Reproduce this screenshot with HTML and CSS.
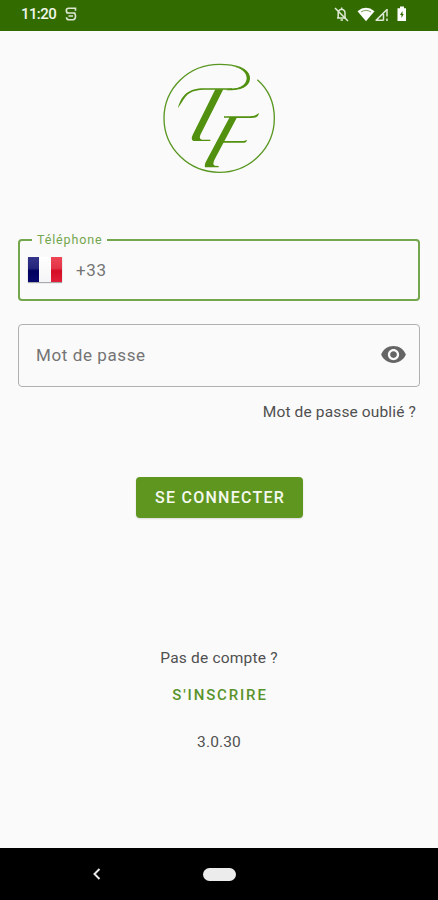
FILE: index.html
```html
<!DOCTYPE html>
<html lang="fr">
<head>
<meta charset="utf-8">
<title>Connexion</title>
<link rel="stylesheet" href="styles.css">
</head>
<body>
<div class="screen">
  <header class="status">
    <span class="clock">11:20</span>
    <svg class="status-s" viewBox="0 0 14 16" width="14" height="16"><path d="M11.500 4.800V2.200H4.600Q2.300 2.200 2.300 4.600T4.600 7H9.200Q11.500 7 11.500 10.200T9 13.800H5Q2.500 13.800 2.500 11.200M2.300 7H11.500M4.500 10H9"/></svg>
    <svg class="status-icons" viewBox="0 0 78 20" width="78" height="20">
      <path class="line" d="M5 14H14M6.200 13.500V9Q6.200 5.600 9.700 5.200Q13 5.600 13 9V13.500M9.700 3.500V5.500"/>
      <path class="line" d="M3 4L16 17M8.500 16H11"/>
      <path class="fill" d="M25.500 7.200Q34 .4 42.500 7.200L34 17.200Z"/>
      <path class="cut thin" d="M29 8Q34 4.800 39 8"/>
      <path class="line" d="M44 16.400L55 5.500M43.500 16.300H51.500M51.500 10V16.500"/>
      <path class="line" d="M55 5V12.500M55 14.500V17"/>
      <path class="fill" d="M65.500 4.200H68V2.500H72V4.200H74V17H65.500Z"/>
      <path class="bolt" d="M70.500 7L68 11H69.500V14L71.700 10H70.500Z"/>
    </svg>
  </header>

  <main class="content">
    <svg class="logo" viewBox="0 0 390 390" width="130" height="130">
      <path class="ring" d="M310 77C342 105 361 147 361 193C361 283 287 355 196 355C105 355 30 283 30 193C30 102 105 31 196 31C246 31 282 43 284 69C286 94 263 106 224 106"/>
      <path class="shape" d="M235 36C266 40 289 52 288 74C286 99 262 109 218 109L218 106C255 105 276 94 278 74C279 55 261 43 235 36Z"/>
      <path class="shape" d="M72 162C82 124 102 103 151 103H235V107H151C112 108 98 119 84 144Z"/>
      <path class="shape" d="M184 106H208L140 241Q133 255 144 257L169 257V261H118Q109 257 117 241Z"/>
      <path class="shape" d="M210 187H279C297 187 307 184 315 177C313 188 308 192 292 192H248L183 314Q173 332 183 335L194 336V340H153Q150 331 160 315L226 191H210Z"/>
      <path class="shape" d="M205 261H251C266 261 273 261 279 257C278 265 273 267 258 266H203Z"/>
    </svg>

    <fieldset class="field phone">
      <legend>Téléphone</legend>
      <div class="phone-row">
        <span class="flag"><i class="blue"></i><i class="white"></i><i class="red"></i></span>
        <span class="prefix">+33</span>
      </div>
    </fieldset>

    <div class="field password">
      <span>Mot de passe</span>
      <svg class="eye" viewBox="0 0 24 24" width="27" height="27"><path d="M12 4.500C7 4.500 2.730 7.610 1 12c1.730 4.390 6 7.500 11 7.500s9.270-3.110 11-7.500c-1.730-4.390-6-7.500-11-7.500zM12 17c-2.760 0-5-2.240-5-5s2.240-5 5-5 5 2.240 5 5-2.240 5-5 5zm0-8c-1.660 0-3 1.340-3 3s1.340 3 3 3 3-1.340 3-3-1.340-3-3-3z"/></svg>
    </div>

    <a class="forgot">Mot de passe oublié ?</a>
    <button class="login">SE CONNECTER</button>
    <p class="no-account">Pas de compte ?</p>
    <a class="signup">S'INSCRIRE</a>
    <p class="version">3.0.30</p>
  </main>

  <nav class="navbar">
    <svg class="back" viewBox="0 0 10 14" width="10" height="14"><path d="M7.500 2L2.500 7L7.500 12"/></svg>
    <span class="home"></span>
  </nav>
</div>
</body>
</html>
```
FILE: styles.css
```css
* { box-sizing: border-box; }
body { margin: 0; font-family: Roboto, sans-serif; color: #505050; background: #fafafa; }
.screen { width: 438px; height: 900px; display: flex; flex-direction: column; }

.status { height: 31px; flex: none; display: flex; align-items: center; background: #326b00; padding: 0 28px 3px 21px; }
.clock { color: #f1f6ec; font-size: 15px; font-weight: 500; line-height: 20px; letter-spacing: -.6px; }
.status-s { margin-left: 8px; fill: none; stroke: #dce7d2; stroke-width: 1.6; }
.status-icons { margin-left: auto; }
.status-icons .line { fill: none; stroke: #dfead6; stroke-width: 1.5; }
.status-icons .fill { fill: #fff; }
.status-icons .cut { fill: none; stroke: #326b00; stroke-width: 2; }
.status-icons .thin { stroke: #8fae74; stroke-width: 1.2; }
.status-icons .bolt { fill: #326b00; }

.content { flex: 1; display: flex; flex-direction: column; align-items: center; padding: 23px 18px 0; }
.logo { flex: none; }
.ring { fill: none; stroke: #5a9722; stroke-width: 4; }
.shape { fill: #51910f; }

.field { width: 402px; flex: none; margin: 0; border-radius: 4px; font-size: 17px; color: #747474; }
.phone { height: 69px; margin-top: 48px; border: 2px solid #74a64d; padding: 0 8px; }
.phone legend { margin-left: 4px; padding: 0 5px; font-size: 12.500px; line-height: 16px; letter-spacing: .85px; color: #74a64d; }
.phone-row { display: flex; align-items: center; padding-top: 9px; }
.flag { width: 34px; height: 25px; display: flex; box-shadow: 0 1px 1px #aaa; }
.flag i { flex: 1; }
.blue { background: linear-gradient(#35358a, #24247c 45%, #00005f 55%, #08086e); }
.white { background: linear-gradient(#fff, #f4f4f6); }
.red { background: linear-gradient(#ee4655, #e3344a 45%, #d50c26 55%, #e02039); }
.prefix { margin-left: 14px; letter-spacing: .7px; }
.password { height: 63px; margin-top: 23px; border: 1px solid #b0b0b0; padding: 0 12px 2px 17px; letter-spacing: .6px; display: flex; align-items: center; justify-content: space-between; }
.eye { fill: #656565; }

.forgot { align-self: flex-end; margin: 15px 4px 0 0; font-size: 15.500px; line-height: 20px; letter-spacing: .14px; color: #505050; }
.login { width: 167px; height: 41px; flex: none; margin-top: 55px; padding: 0; border: 0; border-radius: 4px; background: #5f961f; color: #f4f9ef; font: 500 16px/20px Roboto, sans-serif; letter-spacing: 1.25px; text-indent: 2px; box-shadow: 0 1px 2px #0002; }
p { margin: 0; font-size: 15.500px; line-height: 20px; }
.no-account { margin-top: 130px; letter-spacing: .2px; }
.signup { margin-top: 17px; font-size: 15px; font-weight: 500; line-height: 20px; letter-spacing: 1.85px; text-indent: 2px; color: #5a932a; }
.version { margin-top: 27px; letter-spacing: .15px; }

.navbar { height: 52px; flex: none; display: flex; align-items: center; background: #000; padding-left: 92px; }
.back { fill: none; stroke: #e6e6e6; stroke-width: 2; }
.home { width: 33px; height: 13px; margin-left: 101px; border-radius: 7px; background: #ececec; }
```
